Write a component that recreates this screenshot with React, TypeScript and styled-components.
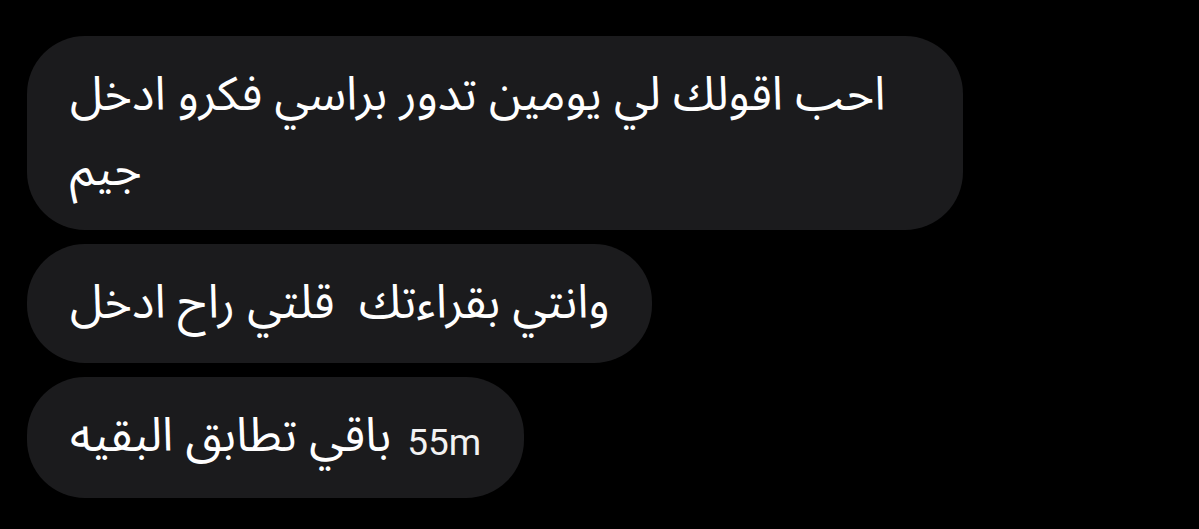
import React from 'react';
import styled, { createGlobalStyle } from 'styled-components';

const GlobalStyle = createGlobalStyle`
    html, body {
        margin: 0;
        padding: 0;
        background: #000;
    }
    body {
        width: 1199px;
        height: 529px;
        overflow: hidden;
    }
`;

const Thread = styled.div`
    display: flex;
    flex-direction: column;
    align-items: flex-start;
    gap: 14px;
    padding: 36px 0 0 27px;
`;

const Bubble = styled.div`
    box-sizing: border-box;
    max-width: 936px;
    padding: 22px 43px;
    border-radius: 58px;
    background-color: #1b1b1d;
    color: #fff;
    display: flex;
    align-items: baseline;
    gap: 16px;
`;

const MessageText = styled.span`
    direction: rtl;
    text-align: left;
    white-space: pre-wrap;
    font-family: "Noto Sans Arabic", "DejaVu Sans", sans-serif;
    font-size: 47px;
    line-height: 75px;
`;

const Time = styled.span`
    font-family: Roboto, "Liberation Sans", sans-serif;
    font-size: 37px;
    line-height: 75px;
    color: #f2f2f2;
    position: relative;
    top: 4px;
`;

function App() {
  return (
    <>
      <GlobalStyle />
      <Thread>
        <Bubble>
          <MessageText>احب اقولك لي يومين تدور براسي فكرو ادخل جيم</MessageText>
        </Bubble>
        <Bubble>
          <MessageText>وانتي بقراءتك  قلتي راح ادخل</MessageText>
        </Bubble>
        <Bubble>
          <MessageText>باقي تطابق البقيه</MessageText>
          <Time>55m</Time>
        </Bubble>
      </Thread>
    </>
  );
}

export default App;
